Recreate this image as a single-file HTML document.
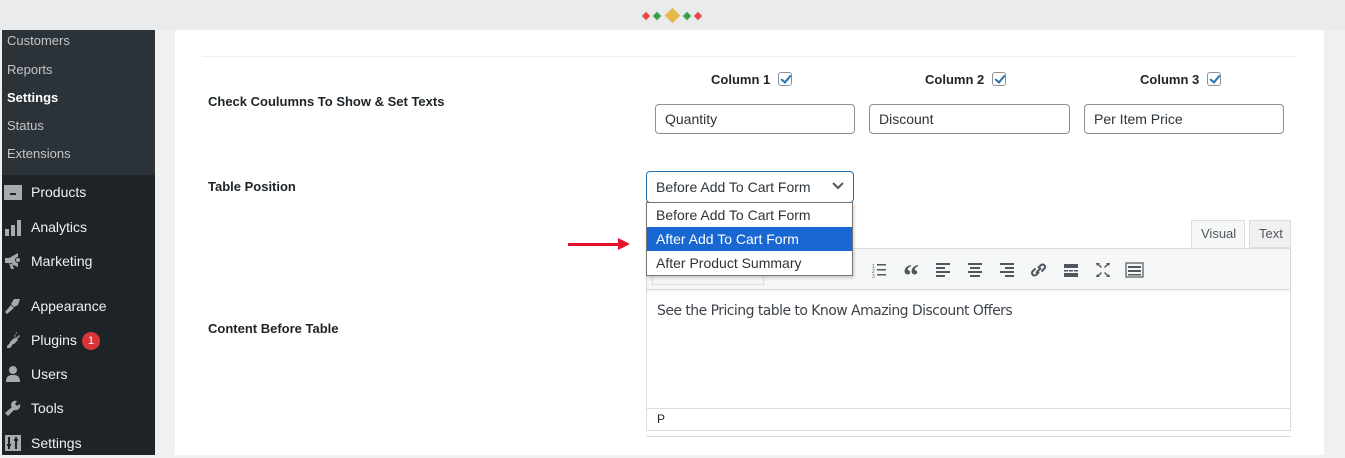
<!DOCTYPE html>
<html><head><style>
*{margin:0;padding:0;box-sizing:border-box}
body{width:1345px;height:458px;background:#f0f0f1;font-family:"Liberation Sans",sans-serif;position:relative;overflow:hidden}
.a{position:absolute}
.top{left:0;top:0;width:1345px;height:30px;background:#eaebec}
.side{left:2px;top:30px;width:153px;height:425px;background:#1d2327}
.sub{left:2px;top:30px;width:153px;height:145px;background:#2c3338}
.si{position:absolute;left:7px;font-size:13px;color:#c3c4c7}
.mi{position:absolute;left:31px;font-size:14px;color:#f0f0f1}
.ic{position:absolute;left:4px;width:18px;height:18px}
.panel{left:175px;top:30px;width:1149px;height:425px;background:#fff}
.lbl{position:absolute;left:208px;font-size:13px;font-weight:bold;color:#1d2327}
.col{position:absolute;font-size:13px;font-weight:bold;color:#1d2327}
.cb{display:inline-block;width:14px;height:14px;border:1px solid #8c8f94;border-radius:3px;vertical-align:-2px;margin-left:8px;position:relative}
.cb:after{content:"";position:absolute;left:4px;top:0px;width:4px;height:8px;border:solid #2271b1;border-width:0 2px 2px 0;transform:rotate(40deg)}
.inp{position:absolute;top:104px;height:30px;border:1px solid #8c8f94;border-radius:4px;font-size:14px;color:#2c3338;padding:6px 9px}
</style></head><body>
<div class="a top"></div>
<div class="a" style="left:643px;top:13px;width:6px;height:6px;background:#e94b4b;transform:rotate(45deg)"></div>
<div class="a" style="left:654px;top:13px;width:6px;height:6px;background:#3aa048;transform:rotate(45deg)"></div>
<div class="a" style="left:667px;top:10px;width:11px;height:11px;background:#e6b94c;transform:rotate(45deg)"></div>
<div class="a" style="left:684px;top:13px;width:6px;height:6px;background:#3aa048;transform:rotate(45deg)"></div>
<div class="a" style="left:695px;top:13px;width:6px;height:6px;background:#e94b4b;transform:rotate(45deg)"></div>

<div class="a side"></div>
<div class="a sub"></div>
<div class="si" style="top:33px">Customers</div>
<div class="si" style="top:62px">Reports</div>
<div class="si" style="top:90px;color:#fff;font-weight:bold">Settings</div>
<div class="si" style="top:118px">Status</div>
<div class="si" style="top:146px">Extensions</div>

<div class="ic" style="top:185px;border-top:4px solid #a7aaad;background:#a7aaad;height:15px;width:18px;left:4px"></div>
<div class="a" style="left:10px;top:193px;width:6px;height:2px;background:#1d2327"></div>
<div class="mi" style="top:184px">Products</div>
<svg class="ic" style="top:219px" viewBox="0 0 18 18"><rect x="1" y="10" width="4" height="7" fill="#a7aaad"/><rect x="7" y="6" width="4" height="11" fill="#a7aaad"/><rect x="13" y="1" width="4" height="16" fill="#a7aaad"/></svg>
<div class="mi" style="top:219px">Analytics</div>
<svg class="ic" style="top:252px" viewBox="0 0 18 18"><path d="M1 6h4l9-5v14l-9-4H1z M5 11l2 6h3l-2-6" fill="#a7aaad"/><circle cx="14" cy="8" r="3" fill="#1d2327"/><circle cx="14" cy="8" r="2" fill="#a7aaad"/></svg>
<div class="mi" style="top:253px">Marketing</div>
<svg class="ic" style="top:297px" viewBox="0 0 18 18"><path d="M10 2l6 0-2 6-4 2-3-3z M7 8l3 3-7 6-2-2z" fill="#a7aaad"/></svg>
<div class="mi" style="top:298px">Appearance</div>
<svg class="ic" style="top:331px" viewBox="0 0 18 18"><path d="M12 1l1 1-3 3 2 2 3-3 1 1-3 3 1 1-4 4-1 0-3 4H3l0-2 3-3v-1l4-4 1 1z" fill="#a7aaad"/></svg>
<div class="mi" style="top:332px">Plugins</div>
<div class="a" style="left:82px;top:332px;width:18px;height:18px;border-radius:9px;background:#d63638;color:#fff;font-size:11px;text-align:center;line-height:18px">1</div>
<svg class="ic" style="top:365px" viewBox="0 0 18 18"><circle cx="9" cy="5" r="4" fill="#a7aaad"/><path d="M2 17c0-6 3-7 7-7s7 1 7 7z" fill="#a7aaad"/></svg>
<div class="mi" style="top:366px">Users</div>
<svg class="ic" style="top:399px" viewBox="0 0 18 18"><path d="M16 5l-3 2-2-2 2-3c-3-1-6 1-6 4 0 1 0 1 1 2L1 14l3 3 6-6c4 1 7-2 6-6z" fill="#a7aaad"/></svg>
<div class="mi" style="top:400px">Tools</div>
<svg class="ic" style="top:434px" viewBox="0 0 18 18"><rect x="1" y="1" width="16" height="16" fill="#a7aaad"/><path d="M5 3v12M12 3v12M3 11h4M10 6h4" stroke="#1d2327" stroke-width="2"/></svg>
<div class="mi" style="top:435px">Settings</div>

<div class="a panel"></div>
<div class="a" style="left:202px;top:56px;width:1094px;height:1px;background:#eee"></div>
<div class="lbl" style="top:94px">Check Coulumns To Show &amp; Set Texts</div>
<div class="lbl" style="top:179px">Table Position</div>
<div class="lbl" style="top:321px">Content Before Table</div>

<div class="col" style="left:711px;top:72px">Column 1<span class="cb"></span></div>
<div class="col" style="left:925px;top:72px">Column 2<span class="cb"></span></div>
<div class="col" style="left:1140px;top:72px">Column 3<span class="cb"></span></div>
<div class="inp" style="left:655px;width:200px">Quantity</div>
<div class="inp" style="left:869px;width:201px">Discount</div>
<div class="inp" style="left:1084px;width:200px">Per Item Price</div>

<!-- editor -->
<div class="a" style="left:1191px;top:220px;width:54px;height:29px;background:#f6f7f7;border:1px solid #dcdcde;border-bottom:none;font-size:13px;color:#50575e;padding:5px 0 0 9px">Visual</div>
<div class="a" style="left:1249px;top:220px;width:42px;height:28px;background:#f0f0f1;border:1px solid #dcdcde;font-size:13px;color:#50575e;padding:5px 0 0 9px">Text</div>
<div class="a" style="left:646px;top:248px;width:645px;height:183px;border:1px solid #dcdcde;background:#fff"></div>
<div class="a" style="left:647px;top:249px;width:643px;height:41px;background:#f6f7f7;border-bottom:1px solid #dcdcde;box-shadow:0 1px 2px rgba(0,0,0,.08)"></div>
<div class="a" style="left:652px;top:258px;width:112px;height:27px;border:1px solid #dcdcde;background:#f6f7f7"></div>
<svg class="a" style="left:870px;top:260px" width="280" height="20" viewBox="0 0 280 20" fill="#50575e">
<text x="2" y="8" font-size="5">1</text><text x="2" y="13" font-size="5">2</text><text x="2" y="18" font-size="5">3</text>
<rect x="7" y="4" width="9" height="1.5"/><rect x="7" y="9" width="9" height="1.5"/><rect x="7" y="14" width="9" height="1.5"/>
<text x="33" y="26" font-size="32" font-weight="bold" font-family="Liberation Serif">“</text>
<rect x="66" y="3" width="14" height="2"/><rect x="66" y="7" width="9" height="2"/><rect x="66" y="11" width="14" height="2"/><rect x="66" y="15" width="9" height="2"/>
<rect x="98" y="3" width="14" height="2"/><rect x="100" y="7" width="10" height="2"/><rect x="98" y="11" width="14" height="2"/><rect x="100" y="15" width="10" height="2"/>
<rect x="130" y="3" width="14" height="2"/><rect x="135" y="7" width="9" height="2"/><rect x="130" y="11" width="14" height="2"/><rect x="135" y="15" width="9" height="2"/>
<path d="M169 12l-3 3a2.5 2.5 0 0 1-3.5-3.5l3-3M168 8l3-3a2.5 2.5 0 0 1 3.5 3.5l-3 3M166 13l5-5" stroke="#50575e" stroke-width="2" fill="none"/>
<rect x="194" y="4" width="14" height="4"/><rect x="194" y="10" width="4" height="1.5"/><rect x="199" y="10" width="4" height="1.5"/><rect x="204" y="10" width="4" height="1.5"/><rect x="194" y="13" width="14" height="4"/>
<path d="M226 3l4 0-1 1 3 3-1 1-3-3-1 1zM240 3l-4 0 1 1-3 3 1 1 3-3 1 1zM226 17l4 0-1-1 3-3-1-1-3 3-1-1zM240 17l-4 0 1-1-3-3 1-1 3 3 1-1z"/>
<rect x="256" y="3" width="17" height="14" fill="none" stroke="#50575e" stroke-width="1.2"/><rect x="258" y="6" width="13" height="2"/><rect x="258" y="10" width="13" height="2"/><rect x="258" y="14" width="13" height="1.5"/>
</svg>
<div class="a" style="left:657px;top:303px;font-family:'DejaVu Sans',sans-serif;font-size:14px;color:#3c434a;letter-spacing:-0.55px">See the Pricing table to Know Amazing Discount Offers</div>
<div class="a" style="left:647px;top:408px;width:643px;height:1px;background:#dcdcde"></div>
<div class="a" style="left:657px;top:412px;font-size:12px;color:#1d2327">P</div>
<div class="a" style="left:646px;top:436px;width:645px;height:1px;background:#dcdcde"></div>

<!-- arrow -->
<div class="a" style="left:568px;top:243px;width:50px;height:3px;background:#e8112d"></div>
<div class="a" style="left:618px;top:238px;width:0;height:0;border-left:12px solid #e8112d;border-top:6px solid transparent;border-bottom:6px solid transparent"></div>

<!-- select -->
<div class="a" style="left:646px;top:171px;width:208px;height:32px;border:1px solid #2271b1;border-radius:4px;background:#fff;font-size:14px;color:#2c3338;padding:7px 9px">Before Add To Cart Form</div>
<svg class="a" style="left:832px;top:181px" width="12" height="10" viewBox="0 0 12 10"><path d="M1 2l5 5 5-5" stroke="#50575e" stroke-width="2" fill="none"/></svg>
<div class="a" style="left:646px;top:202px;width:207px;height:74px;border:1px solid #767676;background:#fff;box-shadow:1px 2px 3px rgba(0,0,0,.2);font-size:14px;color:#2c3338">
<div style="height:24px;padding:4px 9px">Before Add To Cart Form</div>
<div style="height:24px;padding:4px 9px;background:#1967d2;color:#fff">After Add To Cart Form</div>
<div style="height:24px;padding:4px 9px">After Product Summary</div>
</div>
</body></html>
